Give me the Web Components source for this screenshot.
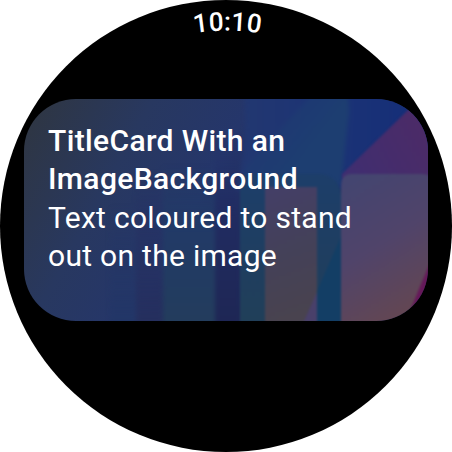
<!DOCTYPE html>
<html lang="en">
<head>
<meta charset="utf-8">
<title>TitleCard</title>
<style>
html,body{margin:0;background:#fff}
body{width:452px;height:452px;overflow:hidden;font-family:Roboto,"Noto Sans",sans-serif}
</style>
</head>
<body>
<watch-screen>
  <time-text slot="time">10:10</time-text>
  <title-card>
    <card-backdrop slot="backdrop"></card-backdrop>
    <span slot="title">TitleCard With an<br>ImageBackground</span>
    <span>Text coloured to stand<br>out on the image</span>
  </title-card>
</watch-screen>
<script>
const define = (name, html, after) => {
  const t = document.createElement('template');
  t.innerHTML = html;
  customElements.define(name, class extends HTMLElement {
    constructor() {
      super();
      this.attachShadow({mode: 'open'}).append(t.content.cloneNode(true));
    }
    connectedCallback() { if (after) after(this); }
  });
};

define('watch-screen', `
<style>
:host{display:grid;grid-template-rows:99px 222px 1fr;grid-template-columns:1fr;width:452px;height:452px;border-radius:50%;background:#000;overflow:hidden}
.card{padding:0 24px;display:grid}
</style>
<slot name="time"></slot>
<div class="card"><slot></slot></div>`);

define('time-text', `
<style>
:host{display:block;height:60px}
svg{display:block}
text{font:500 26px Roboto,sans-serif;fill:#fff;letter-spacing:.1px}
</style>
<svg width="452" height="60" viewBox="0 0 452 60">
  <defs><path id="arc" d="M31 226A195.5 195.5 0 0 1 422 226"/></defs>
  <text text-anchor="middle"><textPath href="#arc" startOffset="50.15%"></textPath></text>
</svg>`, el => {
  el.shadowRoot.querySelector('textPath').textContent = el.textContent.trim();
});

define('title-card', `
<style>
:host{display:grid;border-radius:52px;overflow:hidden;color:#fff}
::slotted([slot=backdrop]),.content{grid-area:1/1}
.content{position:relative;padding:23px 24px;display:flex;flex-direction:column;font-size:30px;line-height:38.4px;white-space:nowrap}
.title{font-weight:500;letter-spacing:.36px}
.body{font-weight:400;letter-spacing:.29px}
</style>
<slot name="backdrop"></slot>
<div class="content">
  <div class="title"><slot name="title"></slot></div>
  <div class="body"><slot></slot></div>
</div>`);

define('card-backdrop', `
<style>
:host{display:block;height:222px}
svg{display:block}
</style>
<svg width="404" height="222" viewBox="24 99 404 222">
  <defs>
    <linearGradient id="base" gradientUnits="userSpaceOnUse" x1="35" y1="120" x2="310" y2="270">
      <stop offset="0" stop-color="#2e3645"/><stop offset=".3" stop-color="#283860"/>
      <stop offset=".58" stop-color="#25366b"/><stop offset="1" stop-color="#1b2553"/>
    </linearGradient>
    <linearGradient id="sky" gradientUnits="userSpaceOnUse" x1="230" y1="0" x2="400" y2="0">
      <stop offset="0" stop-color="#233870"/><stop offset="1" stop-color="#162f78"/>
    </linearGradient>
    <linearGradient id="haze" gradientUnits="userSpaceOnUse" x1="270" y1="120" x2="310" y2="150">
      <stop offset="0" stop-color="#1e3d72" stop-opacity=".3"/><stop offset="1" stop-color="#1d3e71"/>
    </linearGradient>
    <linearGradient id="warm" gradientUnits="userSpaceOnUse" x1="345" y1="185" x2="425" y2="315">
      <stop offset="0" stop-color="#444570"/><stop offset=".45" stop-color="#50446a"/><stop offset="1" stop-color="#66474f"/>
    </linearGradient>
    <linearGradient id="pane" gradientUnits="userSpaceOnUse" x1="265" y1="190" x2="310" y2="310">
      <stop offset="0" stop-color="#443f67"/><stop offset=".5" stop-color="#444159"/><stop offset="1" stop-color="#49434f"/>
    </linearGradient>
    <linearGradient id="teal" x1="0" y1="0" x2="0" y2="1">
      <stop offset="0" stop-color="#1d3e6a"/><stop offset="1" stop-color="#213f58"/>
    </linearGradient>
    <linearGradient id="fadeTeal" x1="0" y1="0" x2="0" y2="1">
      <stop offset="0" stop-color="#213c66" stop-opacity="0"/><stop offset=".4" stop-color="#223a67"/><stop offset="1" stop-color="#233d5c"/>
    </linearGradient>
    <linearGradient id="fadeBlue" x1="0" y1="0" x2="0" y2="1">
      <stop offset="0" stop-color="#253766" stop-opacity="0"/><stop offset="1" stop-color="#223667"/>
    </linearGradient>
    <linearGradient id="fadeIndigo" x1="0" y1="0" x2="0" y2="1">
      <stop offset="0" stop-color="#262e63" stop-opacity="0"/><stop offset="1" stop-color="#252f5d"/>
    </linearGradient>
    <linearGradient id="fadeNavy" x1="0" y1="0" x2="0" y2="1">
      <stop offset="0" stop-color="#22306a" stop-opacity="0"/><stop offset=".4" stop-color="#212c61"/><stop offset="1" stop-color="#1e2654"/>
    </linearGradient>
    <linearGradient id="plum" gradientUnits="userSpaceOnUse" x1="350" y1="170" x2="428" y2="130">
      <stop offset="0" stop-color="#402e70"/><stop offset="1" stop-color="#4c2b67"/>
    </linearGradient>
    <filter id="soft" x="-10%" y="-10%" width="120%" height="120%" color-interpolation-filters="sRGB"><feGaussianBlur stdDeviation="1.3"/></filter>
    <filter id="softer" x="-20%" y="-10%" width="140%" height="120%" color-interpolation-filters="sRGB"><feGaussianBlur stdDeviation="2"/></filter>
  </defs>
  <rect x="24" y="99" width="404" height="222" fill="url(#base)"/>
  <g filter="url(#softer)">
    <path d="M110 205H136V330H110Z" fill="url(#fadeBlue)"/>
    <path d="M136 170H163V330H136Z" fill="url(#fadeIndigo)"/>
    <path d="M163 165H215V330H163Z" fill="url(#fadeTeal)"/>
    <path d="M215 140H240V330H215Z" fill="url(#fadeNavy)"/>
    <path d="M244 90H440V190H236Q249 140 244 90Z" fill="url(#sky)"/>
    <path d="M246 166L316 90H346Q351 108 348 121L341 185H240Z" fill="url(#haze)"/>
  </g>
  <g filter="url(#soft)">
    <path d="M342 174L434 85V185H342Z" fill="url(#plum)"/>
    <path d="M240 330V180Q241 174 248 174H322Q340 178 341 194V240L317 330Z" fill="url(#teal)"/>
    <path d="M342 234V330H300Z" fill="#133e65"/>
    <path d="M265 187H317V330H265Z" fill="url(#pane)"/>
    <path d="M317 292V330H300Z" fill="#49406a"/>
    <path d="M341 330V186Q341 174 352 174H422Q428 174 434 179V330Z" fill="url(#warm)"/>
    <path d="M436 248L402 330H436Z" fill="#651859"/>
  </g>
</svg>`);
</script>
</body>
</html>
